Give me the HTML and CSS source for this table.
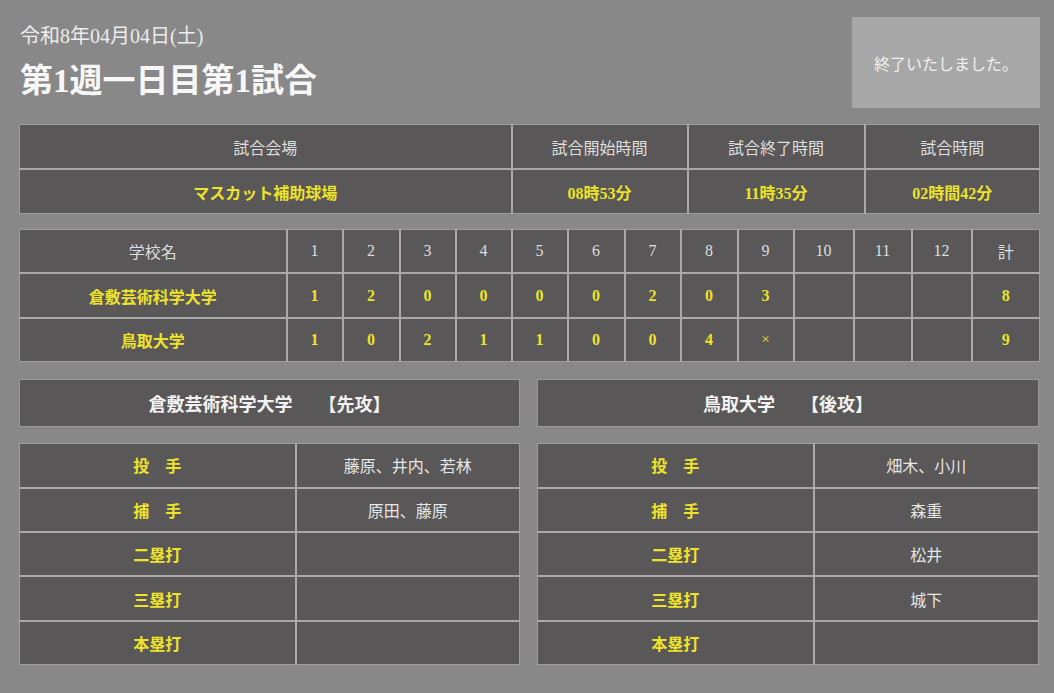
FILE: index.html
```html
<!DOCTYPE html>
<html lang="ja">
<head>
<meta charset="utf-8">
<title>第1週一日目第1試合</title>
<link rel="stylesheet" href="styles.css">
</head>
<body>
<div class="page">
  <header class="top">
    <div class="heading">
      <div class="date">令和8年04月04日(土)</div>
      <h1 class="title">第1週一日目第1試合</h1>
    </div>
    <div class="status">終了いたしました。</div>
  </header>

  <table class="grid info">
    <colgroup><col class="c-venue"><col class="c-t1"><col class="c-t2"><col class="c-t3"></colgroup>
    <tr class="head"><td>試合会場</td><td>試合開始時間</td><td>試合終了時間</td><td>試合時間</td></tr>
    <tr class="val"><td>マスカット補助球場</td><td>08時53分</td><td>11時35分</td><td>02時間42分</td></tr>
  </table>

  <table class="grid score">
    <colgroup>
      <col class="s-name"><col class="s56"><col class="s57"><col class="s56"><col class="s56"><col class="s56"><col class="s57"><col class="s56"><col class="s57"><col class="s56"><col class="s60"><col class="s58"><col class="s60"><col class="s68">
    </colgroup>
    <tr class="head"><td>学校名</td><td>1</td><td>2</td><td>3</td><td>4</td><td>5</td><td>6</td><td>7</td><td>8</td><td>9</td><td>10</td><td>11</td><td>12</td><td>計</td></tr>
    <tr class="val"><td>倉敷芸術科学大学</td><td>1</td><td>2</td><td>0</td><td>0</td><td>0</td><td>0</td><td>2</td><td>0</td><td>3</td><td></td><td></td><td></td><td>8</td></tr>
    <tr class="val"><td>鳥取大学</td><td>1</td><td>0</td><td>2</td><td>1</td><td>1</td><td>0</td><td>0</td><td>4</td><td class="x">×</td><td></td><td></td><td></td><td>9</td></tr>
  </table>

  <div class="teams">
    <section class="team">
      <div class="team-head">倉敷芸術科学大学<span class="side">【先攻】</span></div>
      <table class="grid players">
        <colgroup><col class="p-label"><col class="p-names"></colgroup>
        <tr><td class="label">投　手</td><td class="names">藤原、井内、若林</td></tr>
        <tr><td class="label">捕　手</td><td class="names">原田、藤原</td></tr>
        <tr><td class="label">二塁打</td><td class="names"></td></tr>
        <tr><td class="label">三塁打</td><td class="names"></td></tr>
        <tr><td class="label">本塁打</td><td class="names"></td></tr>
      </table>
    </section>
    <section class="team">
      <div class="team-head">鳥取大学<span class="side">【後攻】</span></div>
      <table class="grid players">
        <colgroup><col class="p-label"><col class="p-names"></colgroup>
        <tr><td class="label">投　手</td><td class="names">畑木、小川</td></tr>
        <tr><td class="label">捕　手</td><td class="names">森重</td></tr>
        <tr><td class="label">二塁打</td><td class="names">松井</td></tr>
        <tr><td class="label">三塁打</td><td class="names">城下</td></tr>
        <tr><td class="label">本塁打</td><td class="names"></td></tr>
      </table>
    </section>
  </div>
</div>
</body>
</html>
```

FILE: styles.css
```css
html, body {
  margin: 0;
  padding: 0;
  background: #888888;
}
body {
  font-family: "Liberation Serif", "Noto Sans CJK JP", serif;
  color: #e2e2e2;
}
.page {
  width: 1020px;
  padding: 17px 0 0 19px;
}
.top {
  display: flex;
  justify-content: space-between;
  align-items: flex-start;
  height: 91px;
}
.heading {
  padding-top: 6px;
  padding-left: 1px;
}
.date {
  font-size: 20px;
  line-height: 26px;
  color: #ececec;
}
.title {
  margin: 10px 0 0;
  font-size: 33px;
  line-height: 44px;
  font-weight: bold;
  color: #f7f7f7;
}
.status {
  width: 188px;
  height: 91px;
  margin-right: -1px;
  background: #a7a7a7;
  color: #f0f0f0;
  font-size: 16px;
  display: flex;
  align-items: center;
  justify-content: center;
}
.grid {
  border-collapse: collapse;
  table-layout: fixed;
  width: 1020px;
  border: 1px solid #9e9e9e;
}
.grid td {
  background: #595757;
  border: 2px solid #a9a9a9;
  height: 43px;
  padding: 0;
  text-align: center;
  vertical-align: middle;
  font-size: 16px;
}
.grid tr:first-child td { border-top-width: 1px; border-top-color: #9e9e9e; }
.grid tr:last-child td { border-bottom-width: 1px; border-bottom-color: #9e9e9e; }
.grid td:first-child { border-left-width: 1px; border-left-color: #9e9e9e; }
.grid td:last-child { border-right-width: 1px; border-right-color: #9e9e9e; }

.head td { color: #dedede; }
.val td { color: #ede22c; font-weight: bold; }
.val td.x { font-weight: normal; font-size: 15px; }

.info { margin-top: 16px; }
.c-venue { width: 492px; }
.c-t1 { width: 176px; }
.c-t2 { width: 177px; }
.c-t3 { width: 175px; }

.score { margin-top: 15px; }
.score td { font-size: 16px; height: 42.4px; }
.s-name { width: 267px; }
.s56 { width: 56px; }
.s57 { width: 57px; }
.s58 { width: 58px; }
.s60 { width: 60px; }
.s68 { width: 68px; }

.teams {
  display: flex;
  gap: 17px;
  margin-top: 17px;
}
.team {
  width: 501px;
  display: flex;
  flex-direction: column;
  gap: 16px;
}
.team + .team { width: 502px; }
.team-head {
  height: 46px;
  background: #595757;
  border: 1px solid #9a9a9a;
  color: #f2f2f2;
  font-weight: bold;
  font-size: 18px;
  display: flex;
  align-items: center;
  justify-content: center;
}
.side { margin-left: 26px; }
.players { width: 100%; }
.players td { height: 42.4px; }
.p-label { width: 276px; }
.label { color: #ede22c; font-weight: bold; }
.names { color: #e6e6e6; }
```
